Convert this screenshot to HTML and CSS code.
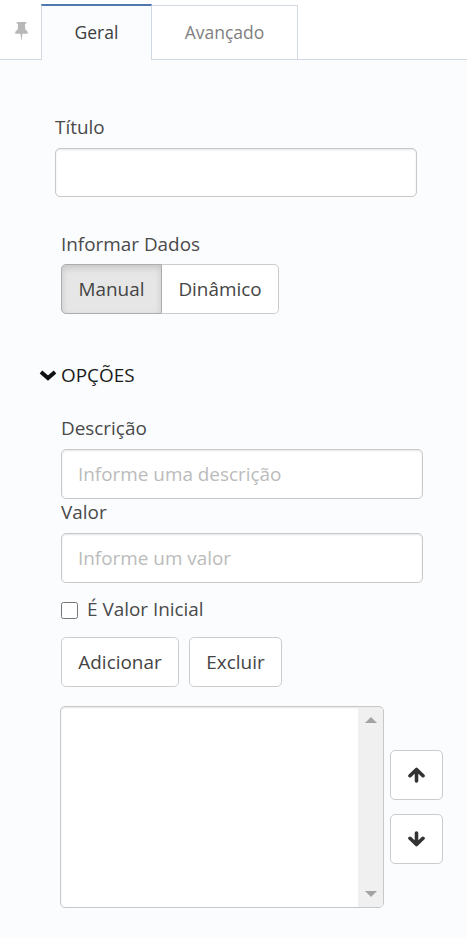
FILE: index.html
```html
<!DOCTYPE html>
<html lang="pt-BR">
<head>
    <meta charset="UTF-8">
    <meta name="viewport" content="width=device-width, initial-scale=1.0">
    <title>Propriedades</title>
    <link rel="stylesheet" href="styles.css">
</head>
<body>
    <div class="tabs">
        <div class="pin">
            <svg width="13" height="18" viewBox="0 0 13 18"><path d="M2.400 0h8.200q.8 0 .8.900t-.8.900h-.7l.4 5.600q2.500 1 2.700 4.400H7.500L6.700 18h-.4l-.8-6.200H0q.2-3.400 2.700-4.400l.4-5.600h-.7q-.8 0-.8-.9T2.400 0z" fill="#b8b8b8"/></svg>
        </div>
        <a class="tab active">Geral</a>
        <a class="tab">Avançado</a>
        <div class="tabs-fill"></div>
    </div>

    <div class="panel">
        <div class="field titulo">
            <label for="titulo">Título</label>
            <input type="text" id="titulo" class="form-control">
        </div>

        <div class="field dados">
            <label>Informar Dados</label>
            <div class="btn-group">
                <button class="btn pressed">Manual</button>
                <button class="btn">Dinâmico</button>
            </div>
        </div>

        <div class="section-title">
            <svg width="18" height="12" viewBox="0 0 18 12"><path d="M2 3l7 6 7-6" fill="none" stroke="#111" stroke-width="4"/></svg>
            <span>OPÇÕES</span>
        </div>

        <div class="field">
            <label for="descricao">Descrição</label>
            <input type="text" id="descricao" class="form-control" placeholder="Informe uma descrição">
        </div>
        <div class="field">
            <label for="valor">Valor</label>
            <input type="text" id="valor" class="form-control" placeholder="Informe um valor">
        </div>

        <label class="check"><input type="checkbox"><span>É Valor Inicial</span></label>

        <div class="actions">
            <button class="btn">Adicionar</button>
            <button class="btn">Excluir</button>
        </div>

        <div class="list-row">
            <div class="list">
                <div class="scrollbar">
                    <span class="arrow-up"></span>
                    <span class="arrow-down"></span>
                </div>
            </div>
            <div class="order">
                <button class="btn btn-icon">
                    <svg width="17" height="16" viewBox="0 0 17 16"><path d="M8.500 14V3M2 8.700l6.500-6.200L15 8.700" fill="none" stroke="#333" stroke-width="3.600" stroke-linecap="round" stroke-linejoin="round"/></svg>
                </button>
                <button class="btn btn-icon">
                    <svg width="17" height="16" viewBox="0 0 17 16"><path d="M8.500 2v11M2 7.300l6.500 6.200L15 7.300" fill="none" stroke="#333" stroke-width="3.600" stroke-linecap="round" stroke-linejoin="round"/></svg>
                </button>
            </div>
        </div>
    </div>
</body>
</html>
```

FILE: styles.css
```css
* {
    box-sizing: border-box;
}
body {
    margin: 0;
    min-height: 938px;
    background: #fbfcfe;
    font-family: "Open Sans", sans-serif;
    font-size: 18.9px;
    line-height: 26px;
    color: #4a4a4a;
}
.tabs {
    display: flex;
    align-items: stretch;
    height: 60px;
    padding-top: 4px;
    background: #fff;
    font-size: 17.5px;
}
.pin {
    width: 41px;
    padding: 18px 0 0 15px;
    border-bottom: 1px solid #d0d8e2;
}
.pin svg {
    display: block;
}
.tab {
    width: 146px;
    margin-top: 1px;
    border: 1px solid #d0d8e2;
    border-left: none;
    line-height: 53px;
    text-align: center;
    color: #808080;
}
.tab.active {
    width: 111px;
    margin-top: 0;
    border: 1px solid #d0d8e2;
    border-top: 2px solid #5078b0;
    border-bottom: none;
    background: #fbfcfe;
    color: #3c3c3c;
}
.tabs-fill {
    flex: 1;
    border-bottom: 1px solid #d0d8e2;
}
.panel {
    padding: 54px 0 0 61px;
}
.field label {
    display: block;
    height: 34px;
}
.field.titulo {
    margin-left: -6px;
}
.titulo .form-control {
    height: 49px;
}
.field.dados {
    margin: 34px 0 48px;
}
.dados label {
    height: 33px;
}
.form-control {
    display: block;
    width: 362px;
    height: 50px;
    padding: 0 16px 1px;
    border: 1px solid #c8c8c8;
    border-radius: 5px;
    background: #fff;
    box-shadow: inset 0 1px 2px rgba(0, 0, 0, 0.1);
    font: inherit;
    color: #444;
}
.form-control::placeholder {
    color: #bbb;
    opacity: 1;
}
.btn {
    height: 50px;
    padding: 0;
    border: 1px solid #ccc;
    border-radius: 5px;
    background: #fff;
    font: inherit;
    color: #444;
    cursor: pointer;
}
.btn-group {
    display: flex;
}
.btn-group .btn:first-child {
    border-radius: 5px 0 0 5px;
    width: 101px;
}
.btn-group .btn:last-child {
    border-left: none;
    border-radius: 0 5px 5px 0;
    width: 117px;
}
.btn.pressed {
    border-color: #adadad;
    background: #e6e6e6;
    box-shadow: inset 0 3px 6px rgba(0, 0, 0, 0.14);
}
.section-title {
    display: flex;
    align-items: center;
    gap: 4px;
    margin: 0 0 27px -22px;
    color: #1a1a1a;
}
.check {
    display: flex;
    align-items: center;
    gap: 9px;
    margin: 13px 0 15px;
}
.check input {
    width: 17px;
    height: 17px;
    margin: 2px 0 0;
}
.actions {
    display: flex;
    gap: 10px;
}
.actions .btn:first-child {
    width: 118px;
}
.actions .btn:last-child {
    width: 93px;
}
.list-row {
    display: flex;
    align-items: center;
    gap: 6px;
    margin: 19px 0 0 -1px;
}
.list {
    display: flex;
    justify-content: flex-end;
    width: 324px;
    height: 202px;
    border: 1px solid #c8c8c8;
    border-radius: 5px;
    background: #fff;
    box-shadow: inset 0 1px 2px rgba(0, 0, 0, 0.1);
    overflow: hidden;
}
.scrollbar {
    display: flex;
    flex-direction: column;
    justify-content: space-between;
    align-items: center;
    width: 25px;
    margin-top: 1px;
    padding: 9px 0 10px;
    background: #f0f0f0;
}
.arrow-up, .arrow-down {
    border: 6px solid transparent;
}
.arrow-up {
    border-top: none;
    border-bottom-color: #a3a3a3;
}
.arrow-down {
    border-bottom: none;
    border-top-color: #a3a3a3;
}
.order {
    display: flex;
    flex-direction: column;
    gap: 14px;
}
.btn-icon {
    display: flex;
    align-items: center;
    justify-content: center;
    width: 53px;
}
```
